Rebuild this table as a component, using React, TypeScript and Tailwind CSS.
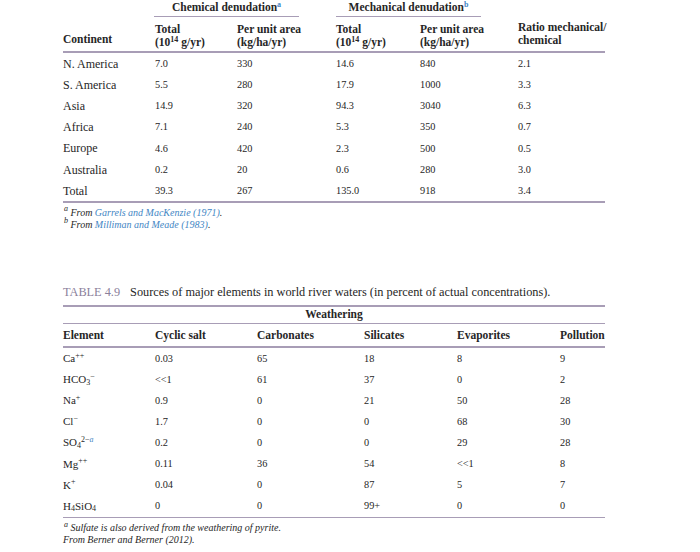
const LINE = "bg-[#a89db6]";

type Row1 = [string, string, string, string, string, string];

const denudation: Row1[] = [
  ["N. America", "7.0", "330", "14.6", "840", "2.1"],
  ["S. America", "5.5", "280", "17.9", "1000", "3.3"],
  ["Asia", "14.9", "320", "94.3", "3040", "6.3"],
  ["Africa", "7.1", "240", "5.3", "350", "0.7"],
  ["Europe", "4.6", "420", "2.3", "500", "0.5"],
  ["Australia", "0.2", "20", "0.6", "280", "3.0"],
  ["Total", "39.3", "267", "135.0", "918", "3.4"],
];

const cols1 = "grid grid-cols-[92px_82px_99px_84px_98px_1fr]";
const cols2 = "grid grid-cols-[92px_102px_107px_93px_103px_1fr]";

function Rule({ thick = false }: { thick?: boolean }) {
  return <div className={`w-full ${thick ? "h-[2px]" : "h-[1.5px]"} ${LINE}`} />;
}

function Sup({ children, blue = false }: { children: React.ReactNode; blue?: boolean }) {
  return (
    <sup className={`text-[8px] top-[-0.55em] ${blue ? "text-[#3f86c4]" : ""}`}>{children}</sup>
  );
}

function Sub({ children }: { children: React.ReactNode }) {
  return <sub className="text-[8px] bottom-[-0.2em]">{children}</sub>;
}

const elements: { el: React.ReactNode; v: string[] }[] = [
  { el: <>Ca<Sup>++</Sup></>, v: ["0.03", "65", "18", "8", "9"] },
  { el: <>HCO<Sub>3</Sub><Sup>−</Sup></>, v: ["<<1", "61", "37", "0", "2"] },
  { el: <>Na<Sup>+</Sup></>, v: ["0.9", "0", "21", "50", "28"] },
  { el: <>Cl<Sup>−</Sup></>, v: ["1.7", "0", "0", "68", "30"] },
  {
    el: (
      <>
        SO<Sub>4</Sub>
        <Sup>
          2−<span className="italic text-[#3f86c4]">a</span>
        </Sup>
      </>
    ),
    v: ["0.2", "0", "0", "29", "28"],
  },
  { el: <>Mg<Sup>++</Sup></>, v: ["0.11", "36", "54", "<<1", "8"] },
  { el: <>K<Sup>+</Sup></>, v: ["0.04", "0", "87", "5", "7"] },
  { el: <>H<Sub>4</Sub>SiO<Sub>4</Sub></>, v: ["0", "0", "99+", "0", "0"] },
];

export default function App() {
  return (
    <div className="w-[700px] h-[552px] bg-white font-['Liberation_Serif',serif] text-[#262626] text-[11.5px] overflow-hidden">
      <div className="ml-[63px] w-[542px]">
        {/* Table 4.8 continuation: denudation */}
        <div className="relative h-[17px]">
          <div className="absolute left-[91px] w-[145px] top-0 h-[17px] flex flex-col">
            <div className="flex-1 flex items-center justify-center font-bold leading-none">
              <span>
                Chemical denudation<Sup blue>a</Sup>
              </span>
            </div>
            <div className={`h-[1.5px] ${LINE}`} />
          </div>
          <div className="absolute left-[273px] w-[145px] top-0 h-[17px] flex flex-col">
            <div className="flex-1 flex items-center justify-center font-bold leading-none">
              <span>
                Mechanical denudation<Sup blue>b</Sup>
              </span>
            </div>
            <div className={`h-[1.5px] ${LINE}`} />
          </div>
        </div>
        <div className={`${cols1} h-[34px] font-bold leading-[13px]`}>
          <div className="self-end pb-[5px]">Continent</div>
          <div className="pt-[6px]">
            Total
            <br />
            (10<Sup>14</Sup> g/yr)
          </div>
          <div className="pt-[6px]">
            Per unit area
            <br />
            (kg/ha/yr)
          </div>
          <div className="pt-[6px]">
            Total
            <br />
            (10<Sup>14</Sup> g/yr)
          </div>
          <div className="pt-[6px]">
            Per unit area
            <br />
            (kg/ha/yr)
          </div>
          <div className="pt-[4px] whitespace-nowrap">
            Ratio mechanical/
            <br />
            chemical
          </div>
        </div>
        <Rule />
        <div className="pt-[0.5px]">
          {denudation.map((r) => (
            <div key={r[0]} className={`${cols1} h-[21.2px] items-center`}>
              {r.map((c, i) => (
                <div key={i} className={i === 0 ? "text-[12px]" : "text-[10.3px]"}>
                  {c}
                </div>
              ))}
            </div>
          ))}
        </div>
        <Rule />
        <div className="pt-[4px] text-[10px] italic leading-[12px]">
          <div className="pl-[1px]">
            <Sup>a</Sup> From <span className="text-[#3f86c4]">Garrels and MacKenzie (1971)</span>.
          </div>
          <div className="pl-[1px]">
            <Sup>b</Sup> From <span className="text-[#3f86c4]">Milliman and Meade (1983)</span>.
          </div>
        </div>

        {/* Table 4.9 */}
        <div className="mt-[53px] text-[12.3px] leading-[16px]">
          <span className="text-[#8b7f9b]">TABLE 4.9</span>
          <span className="ml-[10px]">
            Sources of major elements in world river waters (in percent of actual concentrations).
          </span>
        </div>
        <div className="mt-[5px]">
          <Rule thick />
        </div>
        <div className="h-[16px] flex items-center justify-center font-bold">Weathering</div>
        <Rule />
        <div className={`${cols2} h-[22px] items-center font-bold`}>
          <div>Element</div>
          <div>Cyclic salt</div>
          <div>Carbonates</div>
          <div>Silicates</div>
          <div>Evaporites</div>
          <div>Pollution</div>
        </div>
        <Rule />
        <div>
          {elements.map((r, k) => (
            <div key={k} className={`${cols2} h-[21.1px] items-center text-[10.3px]`}>
              <div className="text-[11px]">{r.el}</div>
              {r.v.map((c, i) => (
                <div key={i}>{c}</div>
              ))}
            </div>
          ))}
        </div>
        <Rule />
        <div className="pt-[4px] text-[10px] italic leading-[12px]">
          <div className="pl-[1px]">
            <Sup>a</Sup> Sulfate is also derived from the weathering of pyrite.
          </div>
          <div>From Berner and Berner (2012).</div>
        </div>
      </div>
    </div>
  );
}
